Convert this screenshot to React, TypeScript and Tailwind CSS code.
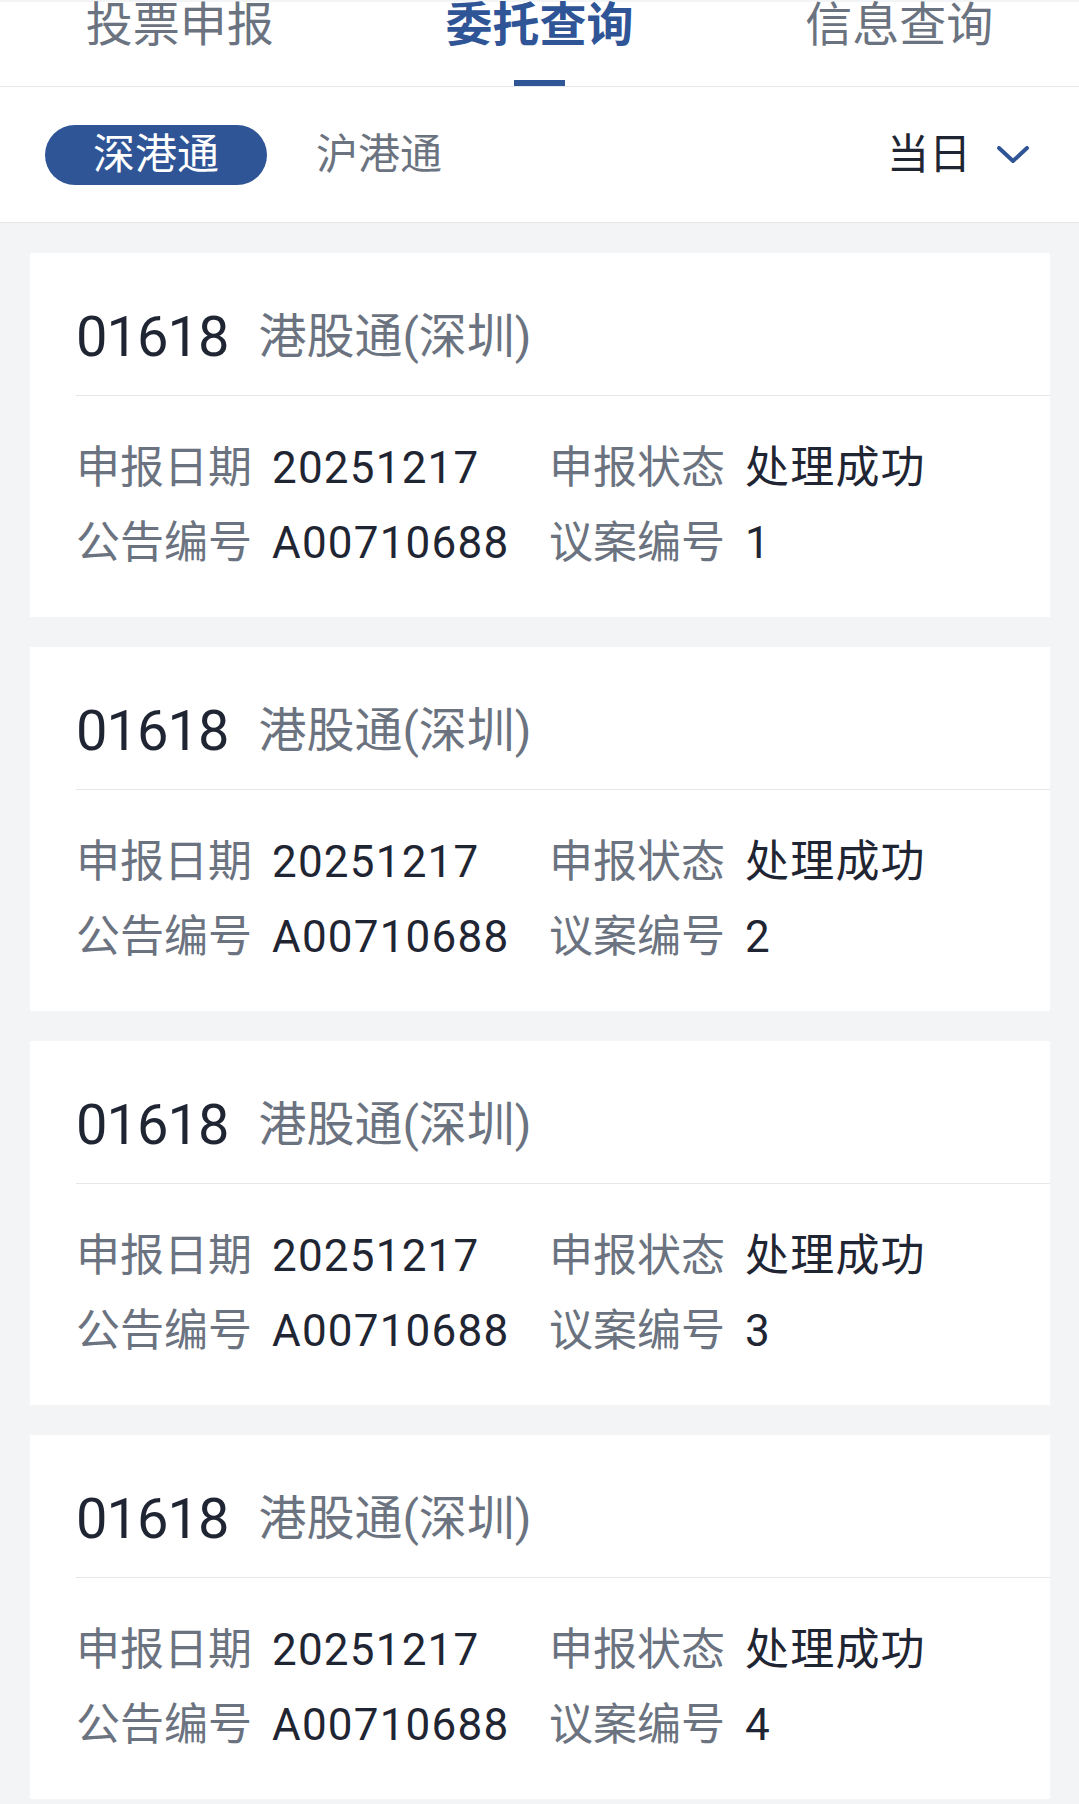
import React, { useState } from 'react';

type Entrust = {
    code: string;
    market: string;
    date: string;
    status: string;
    notice: string;
    motion: string;
};

const records: Entrust[] = [1, 2, 3, 4].map((n) => ({
    code: '01618',
    market: '港股通(深圳)',
    date: '20251217',
    status: '处理成功',
    notice: 'A00710688',
    motion: String(n),
}));

const tabs = ['投票申报', '委托查询', '信息查询'];

const font = { fontFamily: "Roboto, 'Noto Sans CJK SC', sans-serif" };

const Field: React.FC<{ label: string; value: string }> = ({ label, value }) => (
    <div className="flex items-center gap-[20px]">
        <span className="text-[#6b7380]">{label}</span>
        <span className="text-[#1f2532] tracking-[1.2px]">{value}</span>
    </div>
);

const App: React.FC = () => {
    const [activeTab, setActiveTab] = useState(1);
    const [market, setMarket] = useState('深港通');

    return (
        <div className="min-h-[1804px] w-[1079px] bg-[#f3f4f6]" style={font}>
            <div className="h-[2px] bg-[#f3f4f6]" />
            <div className="bg-white border-b border-[#e5e7eb] grid grid-cols-3 h-[85px]">
                {tabs.map((t, i) => (
                    <button
                        key={t}
                        onClick={() => setActiveTab(i)}
                        className="flex flex-col items-center justify-between"
                    >
                        <span
                            className={`text-[47px] leading-[46px] ${i === activeTab ? 'text-[#2f5597] font-bold' : 'text-[#6b7380]'}`}
                        >
                            {t}
                        </span>
                        <span className={`h-[6px] w-[51px] ${i === activeTab ? 'bg-[#2f5597]' : 'bg-transparent'}`} />
                    </button>
                ))}
            </div>

            <div className="bg-white border-b border-[#e5e7eb] h-[136px] flex items-center pl-[45px] pr-[50px]">
                {['深港通', '沪港通'].map((m) => (
                    <button
                        key={m}
                        onClick={() => setMarket(m)}
                        className={`h-[60px] rounded-full text-[42px] leading-none ${market === m ? 'bg-[#2f5597] text-white w-[222px]' : 'text-[#6b7380] ml-[49px]'}`}
                    >
                        {m}
                    </button>
                ))}
                <div className="ml-auto flex items-center gap-[26px]">
                    <span className="text-[42px] text-[#1f2532] leading-none">当日</span>
                    <svg width="32" height="18" viewBox="0 0 32 18" fill="none">
                        <polyline points="2,2 16,15 30,2" stroke="#2f5597" strokeWidth="4" strokeLinecap="round" strokeLinejoin="round" />
                    </svg>
                </div>
            </div>

            <div className="flex flex-col gap-[30px] pt-[30px] pl-[30px] pr-[29px]">
                {records.map((r) => (
                    <div key={r.motion} className="bg-white h-[364px]">
                        <div className="h-[142px] pt-[26px] pl-[46px] flex items-center">
                            <span className="text-[56px] tracking-[-1px] text-[#1f2532] leading-none">{r.code}</span>
                            <span className="text-[48px] text-[#6b7380] ml-[30px] leading-none">{r.market}</span>
                        </div>
                        <div className="ml-[46px] border-t border-[#e5e7eb]" />
                        <div className="pl-[46px] pt-[35px] grid grid-cols-[473px_1fr] text-[44px] leading-[75px]">
                            <Field label="申报日期" value={r.date} />
                            <Field label="申报状态" value={r.status} />
                            <Field label="公告编号" value={r.notice} />
                            <Field label="议案编号" value={r.motion} />
                        </div>
                    </div>
                ))}
            </div>
        </div>
    );
};

export default App;
